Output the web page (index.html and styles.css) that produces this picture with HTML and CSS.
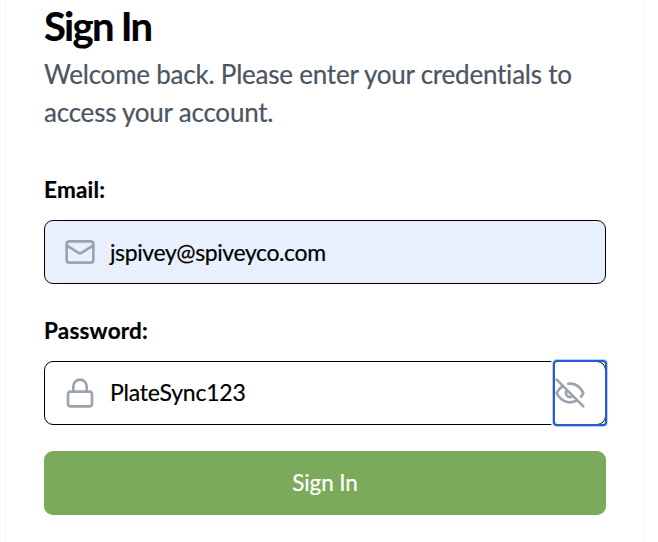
FILE: index.html
```html
<!DOCTYPE html>
<html lang="en">
<head>
<meta charset="utf-8">
<title>Sign In</title>
<link rel="stylesheet" href="styles.css">
</head>
<body>
<main class="card">
  <h1 class="title">Sign In</h1>
  <p class="intro">Welcome back. Please enter your credentials to access your account.</p>
  <form class="form">
    <label class="label">Email:</label>
    <div class="field field-filled">
      <svg class="icon" viewBox="0 0 24 24"><rect width="20" height="16" x="2" y="4" rx="2"/><path d="m22 7-8.97 5.7a1.94 1.94 0 0 1-2.06 0L2 7"/></svg>
      <span class="value value-email">jspivey@spiveyco.com</span>
    </div>
    <label class="label label-password">Password:</label>
    <div class="field">
      <svg class="icon" viewBox="0 0 24 24"><rect width="18" height="11" x="3" y="11" rx="2"/><path d="M7 11V7a5 5 0 0 1 10 0v4"/></svg>
      <span class="value">PlateSync123</span>
      <button class="toggle" type="button" aria-label="Show password">
        <svg class="icon" viewBox="0 0 24 24"><path d="M9.88 9.88a3 3 0 1 0 4.24 4.24M10.73 5.08A10.43 10.43 0 0 1 12 5c7 0 10 7 10 7a13.16 13.16 0 0 1-1.67 2.68M6.61 6.61A13.526 13.526 0 0 0 2 12s3 7 10 7a9.74 9.74 0 0 0 5.39-1.61M2 2l20 20"/></svg>
      </button>
    </div>
    <button class="submit" type="button">Sign In</button>
  </form>
</main>
</body>
</html>
```

FILE: styles.css
```css
* { box-sizing: border-box; }
body { margin: 0; background: #fff; color: #000; font-family: Lato, sans-serif; font-variant-ligatures: none; -webkit-text-stroke: 0.2px; overflow: hidden; }
.card { width: 640px; height: 542px; margin-left: 5px; padding: 6px 38px 0; border: solid #f8f8f9; border-width: 0 1px; }
.title { margin: 0; font-size: 40px; line-height: 40px; font-weight: 700; letter-spacing: -1.75px; }
.intro { margin: 9px 0 0; font-size: 26px; line-height: 38px; color: #4b5563; letter-spacing: -0.22px; }
.form { display: flex; flex-direction: column; margin-top: 43px; }
.label { font-size: 22.5px; line-height: 32px; font-weight: 700; letter-spacing: 0.2px; }
.label-password { margin-top: 31px; }
.field { display: flex; align-items: center; height: 64px; margin-top: 14px; padding-left: 19px; border: 1px solid #000; border-radius: 9px; }
.field-filled { background: #e8f0fe; }
.icon { width: 32px; height: 32px; flex: none; fill: none; stroke: #9ca3af; stroke-width: 2; stroke-linecap: round; stroke-linejoin: round; }
.value { flex: 1; margin-left: 14px; font-size: 23px; line-height: 30px; padding-bottom: 2px; letter-spacing: -0.2px; }
.value-email { padding-bottom: 0; letter-spacing: -0.4px; }
.toggle { display: flex; align-items: center; width: 50px; height: 62px; padding: 0; background: transparent; border: 0; border-radius: 2px; outline: 2px solid #2360cd; box-shadow: 0 0 0 3px #b9ccf2, 0 0 0 4px #fff; }
.toggle .icon { margin-left: -1px; }
.submit { height: 64px; margin-top: 26px; padding: 0 0 2px; border: 0; border-radius: 9px; background: #7aaa5a; color: #fff; font: 22.5px Lato, sans-serif; letter-spacing: -0.1px; }
```
